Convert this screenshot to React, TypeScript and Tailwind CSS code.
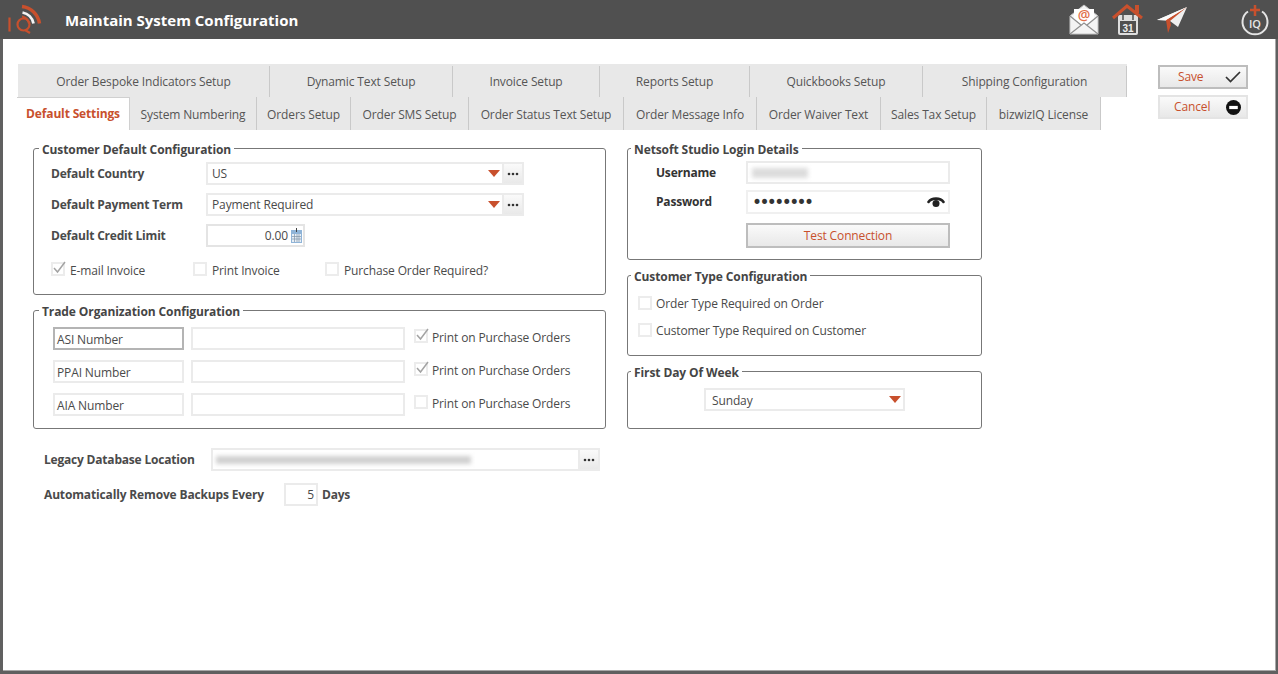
const FONT = "font-['Open_Sans','Noto_Sans',sans-serif]";

const topTabs = [
  { label: "Order Bespoke Indicators Setup", w: "w-[252px]" },
  { label: "Dynamic Text Setup", w: "w-[183px]" },
  { label: "Invoice Setup", w: "w-[147px]" },
  { label: "Reports Setup", w: "w-[150px]" },
  { label: "Quickbooks Setup", w: "w-[173px]" },
  { label: "Shipping Configuration", w: "w-[204px]" },
];

const bottomTabs = [
  { label: "System Numbering", w: "w-[127px]" },
  { label: "Orders Setup", w: "w-[94px]" },
  { label: "Order SMS Setup", w: "w-[118px]" },
  { label: "Order Status Text Setup", w: "w-[155px]" },
  { label: "Order Message Info", w: "w-[133px]" },
  { label: "Order Waiver Text", w: "w-[124px]" },
  { label: "Sales Tax Setup", w: "w-[106px]" },
  { label: "bizwizIQ License", w: "w-[114px]" },
];

const Logo = () => (
  <svg width="44" height="39" viewBox="0 0 44 39" fill="none">
    <path d="M22 6.500a20 20 0 0 1 17.500 17" stroke="#c8502d" strokeWidth="3.500" />
    <path d="M22.500 12.500a14 14 0 0 1 11 11" stroke="#f4f4f4" strokeWidth="2.800" />
    <path d="M22 16.500a9 9 0 0 1 7 7" stroke="#c8502d" strokeWidth="2" />
    <path d="M9.500 17.500v14" stroke="#c8502d" strokeWidth="2.200" />
    <circle cx="23.500" cy="24.500" r="6" stroke="#c8502d" strokeWidth="2.200" />
    <path d="M25 30l5 3" stroke="#c8502d" strokeWidth="2.200" />
  </svg>
);

const MailIcon = () => (
  <svg width="30" height="31" viewBox="0 0 30 31" fill="none">
    <path d="M1 12L15 1l14 11v18H1z" fill="#f4f4f4" stroke="#c4c4c4" />
    <path d="M5 15V5h20v10l-10 7z" fill="#fff" />
    <text x="15" y="15.500" textAnchor="middle" fontSize="14" fontWeight="600" fill="#df6f4b" fontFamily="Open Sans, sans-serif">@</text>
    <path d="M1 12l11 9M29 12l-11 9M1 30l14-11 14 11" stroke="#8f8f8f" strokeWidth="1.200" />
  </svg>
);

const HomeCalendarIcon = () => (
  <svg width="32" height="32" viewBox="0 0 32 32" fill="none">
    <rect x="6" y="11" width="20" height="20" rx="2" fill="#dedede" />
    <path d="M1 14L15 2l15 12" stroke="#c8502d" strokeWidth="3" />
    <rect x="23" y="1" width="4" height="8" fill="#c8502d" />
    <path d="M11 11v5M21 11v5" stroke="#505050" strokeWidth="1.500" />
    <rect x="8" y="17" width="16" height="12" fill="#505050" />
    <text x="16" y="27.500" textAnchor="middle" fontSize="10" fontWeight="700" fill="#eee" fontFamily="Liberation Sans, sans-serif">31</text>
  </svg>
);

const PlaneIcon = () => (
  <svg width="32" height="30" viewBox="0 0 32 30" fill="none">
    <path d="M1 15L31 2l-9 20-8-6z" fill="#efefef" />
    <path d="M31 2L10 15l2 13 3-8-1-4z" fill="#c8502d" />
    <path d="M1 15l9 0L31 2z" fill="#fafafa" />
  </svg>
);

const AddIqIcon = () => (
  <svg width="30" height="32" viewBox="0 0 30 32" fill="none">
    <path d="M8 7.500a12.500 12.500 0 1 0 14 0" stroke="#e4e4e4" strokeWidth="2" />
    <path d="M15 1v11M10 6h10" stroke="#c8502d" strokeWidth="2.500" />
    <text x="15" y="24" textAnchor="middle" fontSize="11" fontWeight="600" fill="#e8e8e8" fontFamily="Open Sans, sans-serif">IQ</text>
  </svg>
);

const Caret = () => (
  <svg width="12" height="7" viewBox="0 0 12 7" className="shrink-0">
    <path d="M0 0h12L6 7z" fill="#c8502d" />
  </svg>
);

const Dots = () => (
  <svg width="12" height="4" viewBox="0 0 12 4">
    <circle cx="2" cy="2" r="1.300" fill="#333" />
    <circle cx="6" cy="2" r="1.300" fill="#333" />
    <circle cx="10" cy="2" r="1.300" fill="#333" />
  </svg>
);

const DotsButton = ({ w = "w-[22px]" }: { w?: string }) => (
  <div className={`${w} h-full shrink-0 flex items-center justify-center bg-gradient-to-b from-[#fafafa] to-[#e9e9e9] border-2 border-[#ebebeb]`}>
    <Dots />
  </div>
);

const Select = ({ value, width }: { value: string; width: string }) => (
  <div className={`${width} h-[23px] flex`}>
    <div className="flex-1 flex items-center justify-between border-2 border-r-0 border-[#ebebeb] pl-1 pr-[2px]">
      <span>{value}</span>
      <Caret />
    </div>
    <DotsButton />
  </div>
);

const Check = ({ checked = false, label, gap = "gap-1" }: { checked?: boolean; label: string; gap?: string }) => (
  <div className={`flex items-center whitespace-nowrap ${gap}`}>
    <div className="relative w-[14px] h-[14px] mb-[3px] shrink-0 border-2 border-[#ececec] bg-white">
      {checked && (
        <svg width="14" height="14" viewBox="0 0 14 14" className="absolute -top-[4px] -left-[1px]">
          <path d="M2 8l3.500 4L13 2" stroke="#a3a3a3" strokeWidth="1.500" fill="none" />
        </svg>
      )}
    </div>
    <span>{label}</span>
  </div>
);

const Group = ({ title, className, inset = "left-[5px]", children }: { title: string; className: string; inset?: string; children: React.ReactNode }) => (
  <div className={`relative border border-[#777] rounded-[3px] ${className}`}>
    <span className={`absolute -top-[8px] ${inset} bg-white px-[3px] leading-[17px] font-bold tracking-[-0.1px] text-[#454545] whitespace-nowrap`}>{title}</span>
    {children}
  </div>
);

const TradeRow = ({ name, focused, checked }: { name: string; focused?: boolean; checked?: boolean }) => (
  <div className="flex items-center h-[23px]">
    <div className={`w-[131px] h-[23px] flex items-center pl-[2px] pt-[2px] border-2 ${focused ? "border-[#b4b4b4]" : "border-[#ebebeb]"}`}>{name}</div>
    <div className="w-[214px] h-[23px] ml-[7px] border-2 border-[#ebebeb]" />
    <div className="ml-[9px] mb-[2px]">
      <Check checked={checked} label="Print on Purchase Orders" />
    </div>
  </div>
);

export default function App() {
  return (
    <div className={`${FONT} w-[1278px] h-[674px] flex flex-col bg-white text-[12px] tracking-[-0.13px] text-[#4a4a4a] overflow-hidden`}>
      <header className="h-[39px] shrink-0 bg-[#505050] flex items-center">
        <Logo />
        <h1 className="ml-[21px] mt-[2px] text-[15px] tracking-normal font-bold text-white">Maintain System Configuration</h1>
        <div className="ml-auto flex items-center">
          <MailIcon />
          <div className="ml-[13px]"><HomeCalendarIcon /></div>
          <div className="ml-[12px]"><PlaneIcon /></div>
          <div className="ml-[52px] mr-[8px]"><AddIqIcon /></div>
        </div>
      </header>

      <main className="flex-1 border-l-[3px] border-r-2 border-b-[3px] border-[#606060] shadow-[inset_-1px_-1px_0_#a8a8a8]">
        <div className="flex pt-[25px] pl-[15px]">
          <div className="w-[1109px]">
            <div className="flex h-[33px] pt-[2px] bg-[#e8e8e8] text-[#555]">
              {topTabs.map((tab) => (
                <div key={tab.label} className={`${tab.w} flex items-center justify-center border-r border-[#c9c9c9]`}>{tab.label}</div>
              ))}
            </div>
            <div className="flex h-[33px] -ml-px text-[#555]">
              <div className="w-[113px] flex items-center justify-center bg-white border-t border-r border-[#d0d0d0] font-bold tracking-[-0.15px] text-[#c8502d]">Default Settings</div>
              {bottomTabs.map((tab) => (
                <div key={tab.label} className={`${tab.w} pt-[2px] flex items-center justify-center bg-[#e8e8e8] border-r border-[#c9c9c9]`}>{tab.label}</div>
              ))}
            </div>
          </div>
          <div className="ml-[31px] pt-px flex flex-col gap-[6px] text-[#c8502d]">
            <div className="w-[90px] h-[24px] flex items-center justify-between pl-[18px] pr-[5px] border-2 border-[#bdbdbd] bg-gradient-to-b from-[#fafafa] to-[#e8e8e8]">
              <span>Save</span>
              <svg width="16" height="12" viewBox="0 0 16 12"><path d="M1 6l4.500 4.500L15 1" stroke="#333" strokeWidth="1.700" fill="none" /></svg>
            </div>
            <div className="w-[90px] h-[24px] flex items-center justify-between pl-[14px] pr-[5px] border-2 border-[#e4e4e4] bg-gradient-to-b from-[#fafafa] to-[#e8e8e8]">
              <span>Cancel</span>
              <svg width="15" height="15" viewBox="0 0 14 14"><circle cx="7" cy="7" r="7" fill="#111" /><rect x="3" y="5.500" width="8" height="3" fill="#fff" /></svg>
            </div>
          </div>
        </div>

        <div className="flex pl-[30px] pt-[18px] gap-[21px]">
          <div className="w-[573px]">
            <Group title="Customer Default Configuration" className="h-[147px] pt-[13px] pl-[17px]">
              <div className="flex items-center h-[23px]">
                <span className="w-[155px] font-bold tracking-[-0.2px]">Default Country</span>
                <Select value="US" width="w-[318px]" />
              </div>
              <div className="flex items-center h-[23px] mt-[8px]">
                <span className="w-[155px] font-bold tracking-[-0.2px]">Default Payment Term</span>
                <Select value="Payment Required" width="w-[318px]" />
              </div>
              <div className="flex items-center h-[23px] mt-[8px]">
                <span className="w-[155px] font-bold tracking-[-0.2px]">Default Credit Limit</span>
                <div className="w-[99px] h-[23px] flex items-center justify-end gap-[3px] border-2 border-[#e4e4e4] pr-px">
                  <span>0.00</span>
                  <svg width="11" height="15" viewBox="0 0 11 15">
                    <rect x="0" y="2" width="11" height="13" fill="#8fb4d8" />
                    <rect x="1" y="6" width="9" height="8" fill="#e6eef6" />
                    <path d="M1 8.500h9M1 11h9M3.500 6v8M6 6v8M8 6v8" stroke="#7f93a8" strokeWidth="0.700" />
                    <path d="M5.500 0v4" stroke="#444" />
                  </svg>
                </div>
              </div>
              <div className="flex items-center mt-[15px] h-[17px]">
                <div className="w-[142px]"><Check checked gap="gap-[5px]" label="E-mail Invoice" /></div>
                <div className="w-[132px]"><Check gap="gap-[5px]" label="Print Invoice" /></div>
                <Check gap="gap-[5px]" label="Purchase Order Required?" />
              </div>
            </Group>

            <Group title="Trade Organization Configuration" className="mt-[15px] h-[119px] pt-[16px] pl-[19px]">
              <div className="flex flex-col gap-[10px]">
                <TradeRow name="ASI Number" focused checked />
                <TradeRow name="PPAI Number" checked />
                <TradeRow name="AIA Number" />
              </div>
            </Group>

            <div className="flex items-center h-[23px] mt-[19px] pl-[11px]">
              <span className="w-[167px] font-bold tracking-[-0.2px]">Legacy Database Location</span>
              <div className="w-[389px] h-[23px] flex">
                <div className="flex-1 border-2 border-r-0 border-[#ebebeb] flex items-center pl-[3px] overflow-hidden">
                  <div className="w-[255px] h-[8px] bg-[#d0d0d0] blur-[2px]" />
                </div>
                <DotsButton />
              </div>
            </div>
            <div className="flex items-center h-[23px] mt-[12px] pl-[11px]">
              <span className="w-[240px] font-bold tracking-[-0.15px]">Automatically Remove Backups Every</span>
              <div className="w-[34px] h-[23px] flex items-center justify-end pr-[2px] border-2 border-[#ebebeb]">5</div>
              <span className="ml-[4px] font-bold tracking-[-0.2px]">Days</span>
            </div>
          </div>

          <div className="w-[355px]">
            <Group title="Netsoft Studio Login Details" inset="left-[3px]" className="h-[112px] pt-[12px]">
              <div className="flex items-center h-[23px]">
                <span className="w-[118px] pl-[28px] font-bold tracking-[-0.2px] text-[#333]">Username</span>
                <div className="w-[204px] h-[23px] border-2 border-[#ebebeb] flex items-center pl-[4px]">
                  <div className="w-[56px] h-[10px] bg-[#dcdcdc] blur-[2px]" />
                </div>
              </div>
              <div className="flex items-center h-[24px] mt-[6px]">
                <span className="w-[118px] pl-[28px] font-bold tracking-[-0.2px] text-[#333]">Password</span>
                <div className="w-[204px] h-[24px] border-2 border-[#f0f0f0] flex items-center justify-between pl-[4px] pr-[3px] text-[#333]">
                  <span className="text-[17px] leading-none tracking-[-2.6px] font-['DejaVu_Sans',sans-serif]">••••••••</span>
                  <svg width="18" height="12" viewBox="0 0 18 12">
                    <path d="M1.500 6C4.500 1.500 13.500 1.500 16.500 6" stroke="#222" strokeWidth="2.600" strokeLinecap="round" fill="none" />
                    <circle cx="9" cy="7.500" r="3.500" fill="#222" />
                  </svg>
                </div>
              </div>
              <div className="ml-[118px] mt-[9px] w-[204px] h-[25px] pt-px flex items-center justify-center border-2 border-[#bdbdbd] bg-gradient-to-b from-[#fafafa] to-[#e8e8e8] text-[#c8502d]">Test Connection</div>
            </Group>

            <Group title="Customer Type Configuration" inset="left-[3px]" className="mt-[15px] h-[81px] pt-[19px] pl-[10px]">
              <div className="flex flex-col gap-[9px]">
                <Check label="Order Type Required on Order" />
                <Check label="Customer Type Required on Customer" />
              </div>
            </Group>

            <Group title="First Day Of Week" inset="left-[3px]" className="mt-[15px] h-[58px] pt-[16px] pl-[76px]">
              <div className="w-[201px] h-[23px] flex items-center justify-between border-2 border-[#ebebeb] pl-[6px] pr-[2px]">
                <span className="pt-[2px]">Sunday</span>
                <Caret />
              </div>
            </Group>
          </div>
        </div>
      </main>
    </div>
  );
}
